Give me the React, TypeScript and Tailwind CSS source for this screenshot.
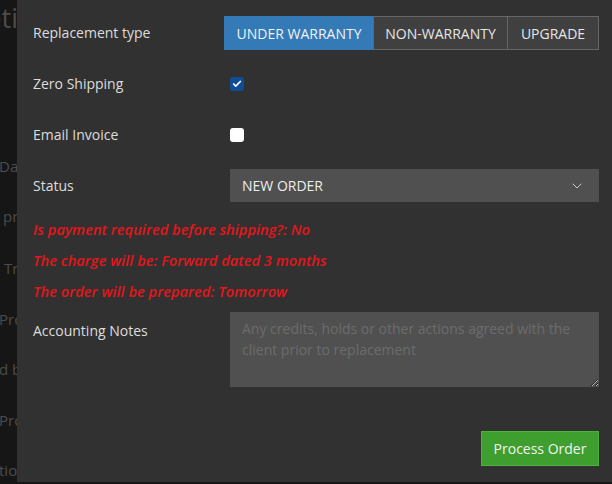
import React, { useState } from 'react';
import { ChevronDown, Check } from 'lucide-react';

const backdropWords = [
  { text: 'Date created', top: 'mt-[126px]' },
  { text: 'proved', top: 'mt-[31px]', pad: 'pl-[4px]' },
  { text: 'Tracking', top: 'mt-[33px]', pad: 'pl-[5px]' },
  { text: 'Product', top: 'mt-[32px]' },
  { text: 'd by', top: 'mt-[31px]' },
  { text: 'Product', top: 'mt-[32px]' },
  { text: 'tion', top: 'mt-[31px]' },
];

function App() {
  const [type, setType] = useState('UNDER WARRANTY');
  const [zeroShipping, setZeroShipping] = useState(true);
  const [emailInvoice, setEmailInvoice] = useState(false);

  const types = [
    { label: 'UNDER WARRANTY', width: 'w-[150px]' },
    { label: 'NON-WARRANTY', width: 'w-[135px]' },
    { label: 'UPGRADE', width: 'flex-1' },
  ];

  return (
    <div
      className="relative w-[612px] h-[484px] overflow-hidden bg-[#161616] text-[14px]"
      style={{ fontFamily: '"Open Sans", "DejaVu Sans", sans-serif' }}
    >
      {/* page behind the modal */}
      <div className="flex flex-col text-[#4c4c4c] whitespace-nowrap">
        <div className="text-[27px] leading-none mt-[4px] -ml-[36px]">Options</div>
        {backdropWords.map((w, i) => (
          <div key={i} className={`${w.top} ${w.pad ?? ''} text-[15px] leading-[19px] -ml-[1px]`}>
            {w.text}
          </div>
        ))}
      </div>

      {/* modal */}
      <div className="absolute left-[17px] top-0 right-0 bottom-[2px] bg-[#313131] pl-[16px] pr-[13px] pt-[16px] text-[#dddddd]">
        <div className="flex flex-col gap-[17px]">
          <div className="grid grid-cols-[197px_1fr] h-[34px] items-center">
            <div className="-mt-[1px]">Replacement type</div>
            <div className="flex h-[34px] -ml-[6px]">
              {types.map((t, i) => (
                <button
                  key={t.label}
                  onClick={() => setType(t.label)}
                  className={`${t.width} h-full flex items-center justify-center border ${
                    type === t.label
                      ? 'bg-[#337ab7] border-[#337ab7] text-[#f2f2f2]'
                      : 'bg-[#404040] border-[#666666] text-[#e6e6e6]'
                  } ${i > 0 ? '-ml-px' : ''}`}
                >
                  {t.label}
                </button>
              ))}
            </div>
          </div>

          <div className="grid grid-cols-[197px_1fr] h-[34px] items-center">
            <div className="-mt-[1px]">Zero Shipping</div>
            <button
              onClick={() => setZeroShipping(!zeroShipping)}
              className={`w-[14px] h-[14px] rounded-[3px] flex items-center justify-center ${
                zeroShipping ? 'bg-[#0f4e96]' : 'bg-white'
              }`}
            >
              {zeroShipping && <Check size={10} strokeWidth={4} className="text-white" />}
            </button>
          </div>

          <div className="grid grid-cols-[197px_1fr] h-[34px] items-center">
            <div className="-mt-[1px]">Email Invoice</div>
            <button
              onClick={() => setEmailInvoice(!emailInvoice)}
              className={`w-[14px] h-[14px] rounded-[3px] flex items-center justify-center ${
                emailInvoice ? 'bg-[#0f4e96]' : 'bg-white'
              }`}
            >
              {emailInvoice && <Check size={10} strokeWidth={4} className="text-white" />}
            </button>
          </div>

          <div className="grid grid-cols-[197px_1fr] h-[33px] items-center">
            <div>Status</div>
            <div className="h-[33px] bg-[#505050] flex items-center justify-between pl-[12px] pr-[14px] text-[#eeeeee]">
              <span className="-mt-[1px]">NEW ORDER</span>
              <ChevronDown size={16} strokeWidth={1.5} className="text-[#cccccc]" />
            </div>
          </div>
        </div>

        <div className="mt-[12px] flex flex-col italic font-semibold text-[14.7px] text-[#e3161b] leading-[31px]">
          <div>Is payment required before shipping?: No</div>
          <div>The charge will be: Forward dated 3 months</div>
          <div>The order will be prepared: Tomorrow</div>
        </div>

        <div className="mt-[5px] grid grid-cols-[197px_1fr]">
          <div className="pt-[8px]">Accounting Notes</div>
          <textarea
            className="h-[75px] bg-[#505050] text-[#eeeeee] placeholder:text-[#6c6c6c] px-[12px] py-[6px] leading-[21px] outline-none"
            placeholder="Any credits, holds or other actions agreed with the client prior to replacement"
          />
        </div>

        <div className="mt-[44px] flex justify-end">
          <button className="w-[118px] h-[35px] bg-[#3e9f2e] border border-[#4cb43a] text-[#f2f2f2]">
            Process Order
          </button>
        </div>
      </div>
    </div>
  );
}

export default App;
